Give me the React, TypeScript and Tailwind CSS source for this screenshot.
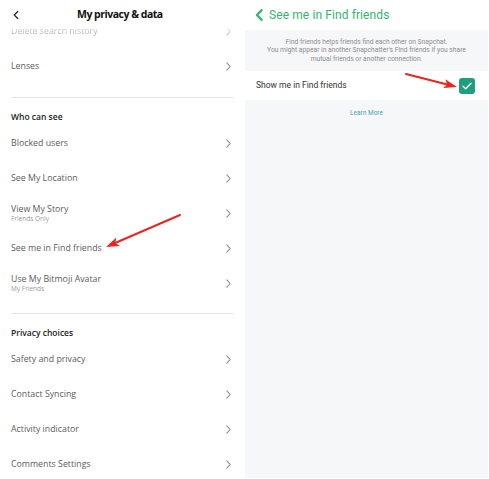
import { ChevronLeft } from 'lucide-react'

type Row = { title: string; sub?: string }

const sectionOne: Row[] = [
  { title: 'Blocked users' },
  { title: 'See My Location' },
  { title: 'View My Story', sub: 'Friends Only' },
  { title: 'See me in Find friends' },
  { title: 'Use My Bitmoji Avatar', sub: 'My Friends' },
]

const sectionTwo: Row[] = [
  { title: 'Safety and privacy' },
  { title: 'Contact Syncing' },
  { title: 'Activity indicator' },
  { title: 'Comments Settings' },
]

function SettingRow({ title, sub }: Row) {
  return (
    <div className="flex h-[35px] items-center justify-between pl-[11px] pr-[9px]">
      <div className="flex flex-col">
        <span className="text-[8.8px] leading-[12px] text-[#5c5c5c]">{title}</span>
        {sub && <span className="text-[6.5px] leading-[8px] text-[#9a9a9a]">{sub}</span>}
      </div>
      <svg width="5" height="9" viewBox="0 0 5 9" fill="none">
        <path d="M0.8 0.8L4.2 4.5L0.8 8.2" stroke="#8a8a8a" strokeWidth={1.1} strokeLinecap="round" strokeLinejoin="round" />
      </svg>
    </div>
  )
}

function SectionTitle({ children }: { children: string }) {
  return (
    <div className="h-[28px] pl-[11px] pt-[13px]">
      <span className="block text-[8.5px] font-semibold leading-[12px] text-[#222]">{children}</span>
    </div>
  )
}

function Arrow({ x1, y1, x2, y2 }: { x1: number; y1: number; x2: number; y2: number }) {
  const angle = Math.atan2(y2 - y1, x2 - x1)
  const len = 14
  const spread = 0.33
  const ax = x2 - len * Math.cos(angle - spread)
  const ay = y2 - len * Math.sin(angle - spread)
  const bx = x2 - len * Math.cos(angle + spread)
  const by = y2 - len * Math.sin(angle + spread)
  const mx = x2 - (len - 4) * Math.cos(angle)
  const my = y2 - (len - 4) * Math.sin(angle)
  return (
    <g>
      <path d={`M${x1} ${y1} L${mx} ${my}`} stroke="#e8261f" strokeWidth={2} strokeLinecap="round" />
      <path d={`M${x2} ${y2} L${ax} ${ay} L${mx} ${my} L${bx} ${by} Z`} fill="#e8261f" />
    </g>
  )
}

export default function App() {
  return (
    <div
      className="relative flex h-[479px] w-[489px] gap-[5px] overflow-hidden bg-white"
      style={{ fontFamily: '"Open Sans", "Noto Sans", sans-serif' }}
    >
      {/* left: privacy & data list */}
      <div className="relative flex w-[240px] flex-col">
        <div className="relative z-10 flex h-[29px] shrink-0 items-center bg-white">
          <ChevronLeft className="ml-[9px] h-[14px] w-[14px] text-[#222]" strokeWidth={2} />
          <span className="ml-[54px] text-[10.5px] font-bold tracking-[-0.5px] text-[#111]">
            My privacy &amp; data
          </span>
        </div>
        <div className="pointer-events-none absolute left-0 right-0 top-[29px] z-10 h-[18px] bg-gradient-to-b from-white/70 to-white/0" />
        <div className="flex flex-col">
          <div className="-mt-[15.5px] blur-[0.4px]">
            <SettingRow title="Delete search history" />
          </div>
          <SettingRow title="Lenses" />
          <div className="ml-[11px] mr-[6px] mt-[13px] border-t border-[#e6e6e6]" />
          <SectionTitle>Who can see</SectionTitle>
          {sectionOne.map((r) => (
            <SettingRow key={r.title} {...r} />
          ))}
          <div className="ml-[11px] mr-[6px] mt-[12px] border-t border-[#e6e6e6]" />
          <SectionTitle>Privacy choices</SectionTitle>
          {sectionTwo.map((r) => (
            <SettingRow key={r.title} {...r} />
          ))}
        </div>
      </div>

      {/* right: find friends toggle */}
      <div
        className="flex h-[478px] w-[243px] flex-col bg-[#f6f7f9]"
        style={{ fontFamily: 'Roboto, "Noto Sans", sans-serif' }}
      >
        <div className="flex h-[30px] items-center bg-white pl-[10px]">
          <svg width="8" height="12" viewBox="0 0 8 12" fill="none">
            <path d="M6.5 1.2L2 6L6.5 10.8" stroke="#34b46e" strokeWidth={2.4} strokeLinecap="round" strokeLinejoin="round" />
          </svg>
          <span className="ml-[6px] text-[12px] tracking-[0.1px] text-[#34b46e]">See me in Find friends</span>
        </div>
        <div className="flex h-[41px] flex-col items-center justify-center text-center text-[6.7px] leading-[8.5px] text-[#8d8d8d]">
          <span>Find friends helps friends find each other on Snapchat.</span>
          <span>You might appear in another Snapchatter's Find friends if you share</span>
          <span>mutual friends or another connection.</span>
        </div>
        <div className="flex h-[29px] items-center justify-between bg-white pl-[11px] pr-[13px]">
          <span className="text-[8.5px] text-[#333]">Show me in Find friends</span>
          <div className="flex h-[16px] w-[16px] items-center justify-center rounded-[3px] bg-[#1f9e7f]">
            <svg width="10" height="8" viewBox="0 0 10 8" fill="none">
              <path d="M1 4.2L3.7 6.8L9 1.2" stroke="white" strokeWidth={1.3} strokeLinecap="round" strokeLinejoin="round" />
            </svg>
          </div>
        </div>
        <div className="mt-[9px] text-center text-[6.5px] text-[#4ba3b6]">Learn More</div>
      </div>

      {/* annotation arrows */}
      <svg className="pointer-events-none absolute left-0 top-0 z-20" width="489" height="479">
        <Arrow x1={180} y1={215} x2={106} y2={247} />
        <Arrow x1={406} y1={74} x2={457} y2={87} />
      </svg>
    </div>
  )
}
